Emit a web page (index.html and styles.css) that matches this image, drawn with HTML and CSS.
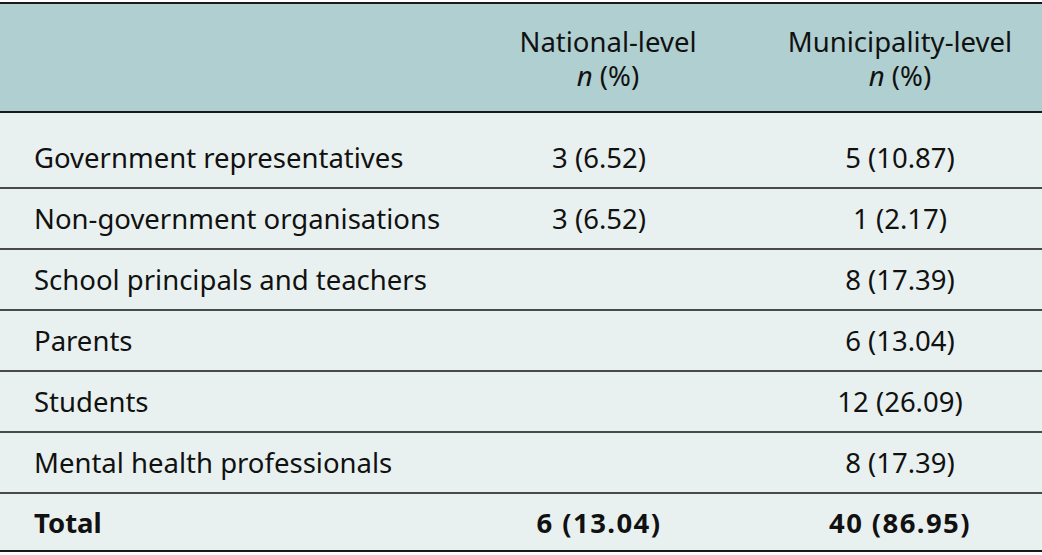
FILE: index.html
```html
<!DOCTYPE html>
<html lang="en">
<head>
<meta charset="utf-8">
<title>Participants</title>
<link rel="stylesheet" href="styles.css">
</head>
<body>
<table class="data-table">
  <thead>
    <tr>
      <th class="col-label"></th>
      <th class="col-nat">National-level<br><i>n</i> (%)</th>
      <th class="col-mun">Municipality-level<br><i>n</i> (%)</th>
    </tr>
  </thead>
  <tbody>
    <tr class="first">
      <td class="col-label">Government representatives</td>
      <td class="col-nat">3 (6.52)</td>
      <td class="col-mun">5 (10.87)</td>
    </tr>
    <tr>
      <td class="col-label">Non-government organisations</td>
      <td class="col-nat">3 (6.52)</td>
      <td class="col-mun">1 (2.17)</td>
    </tr>
    <tr>
      <td class="col-label">School principals and teachers</td>
      <td class="col-nat"></td>
      <td class="col-mun">8 (17.39)</td>
    </tr>
    <tr>
      <td class="col-label">Parents</td>
      <td class="col-nat"></td>
      <td class="col-mun">6 (13.04)</td>
    </tr>
    <tr>
      <td class="col-label">Students</td>
      <td class="col-nat"></td>
      <td class="col-mun">12 (26.09)</td>
    </tr>
    <tr>
      <td class="col-label">Mental health professionals</td>
      <td class="col-nat"></td>
      <td class="col-mun">8 (17.39)</td>
    </tr>
    <tr class="total">
      <td class="col-label">Total</td>
      <td class="col-nat">6 (13.04)</td>
      <td class="col-mun">40 (86.95)</td>
    </tr>
  </tbody>
</table>
</body>
</html>
```

FILE: styles.css
```css
html, body {
  margin: 0;
  padding: 0;
  background: #ffffff;
}

body {
  padding-top: 2px;
  font-family: "Noto Sans", "Open Sans", sans-serif;
  font-size: 27.5px;
  color: #111;
}

.data-table {
  width: 1042px;
  border-collapse: separate;
  border-spacing: 0;
  table-layout: fixed;
  border-top: 2px solid #1a1a1a;
}

.data-table th,
.data-table td {
  padding: 0;
  line-height: 32px;
  font-weight: normal;
  vertical-align: middle;
}

.data-table thead th {
  background: #b0cfd0;
  line-height: 34px;
  padding-top: 21px;
  padding-bottom: 18px;
  border-bottom: 2px solid #1a1a1a;
}

.data-table tbody td {
  background: #e9f1f0;
  padding-top: 14px;
  padding-bottom: 13px;
  border-bottom: 2px solid #4a4a4a;
}

.data-table tbody tr.first td {
  padding-top: 29px;
  padding-bottom: 13px;
}

.data-table tbody tr.total td {
  font-weight: bold;
  padding-top: 13px;
  padding-bottom: 11px;
  border-bottom: 2px solid #1a1a1a;
}

.data-table tbody tr.total td.col-nat,
.data-table tbody tr.total td.col-mun {
  letter-spacing: 1.4px;
}

.col-label {
  width: 470px;
  text-align: left;
  padding-left: 34px !important;
  box-sizing: border-box;
}

.col-nat {
  width: 240px;
  text-align: center;
}

thead .col-nat {
  padding-left: 18px !important;
}

.col-mun {
  text-align: center;
  padding-left: 30px !important;
}
```
